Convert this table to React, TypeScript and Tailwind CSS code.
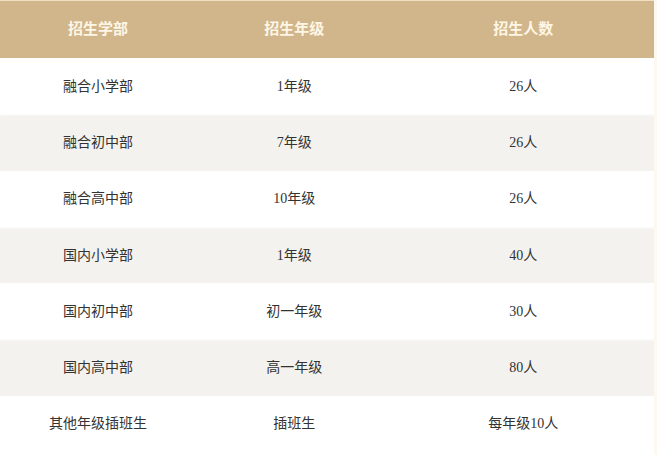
const rows: [string, string, string][] = [
  ["融合小学部", "1年级", "26人"],
  ["融合初中部", "7年级", "26人"],
  ["融合高中部", "10年级", "26人"],
  ["国内小学部", "1年级", "40人"],
  ["国内初中部", "初一年级", "30人"],
  ["国内高中部", "高一年级", "80人"],
  ["其他年级插班生", "插班生", "每年级10人"],
];

export default function App() {
  return (
    <div
      className="flex min-h-screen w-[657px] bg-white"
      style={{ fontFamily: '"Liberation Serif", "Noto Sans CJK SC", serif' }}
    >
      <div className="w-[654px]">
        <div className="flex h-[58px] items-center border-t border-[#efe0c2] bg-[#d2b68b] text-[15px] font-bold text-[#fdf6e6]">
          <div className="w-[30%] text-center">招生学部</div>
          <div className="w-[30%] text-center">招生年级</div>
          <div className="w-[40%] text-center">招生人数</div>
        </div>
        {rows.map((r, i) => (
          <div
            key={i}
            className={`flex h-[56.3px] items-center text-[14px] text-[#333] ${
              i % 2 === 1 ? "bg-[#f3f2ee] shadow-[inset_0_2px_3px_-1px_#ffffff]" : "bg-white"
            }`}
          >
            <div className="w-[30%] text-center">{r[0]}</div>
            <div className="w-[30%] text-center">{r[1]}</div>
            <div className="w-[40%] text-center">{r[2]}</div>
          </div>
        ))}
      </div>
      <div className="w-[3px] bg-[#fdf9f0]" />
    </div>
  );
}
